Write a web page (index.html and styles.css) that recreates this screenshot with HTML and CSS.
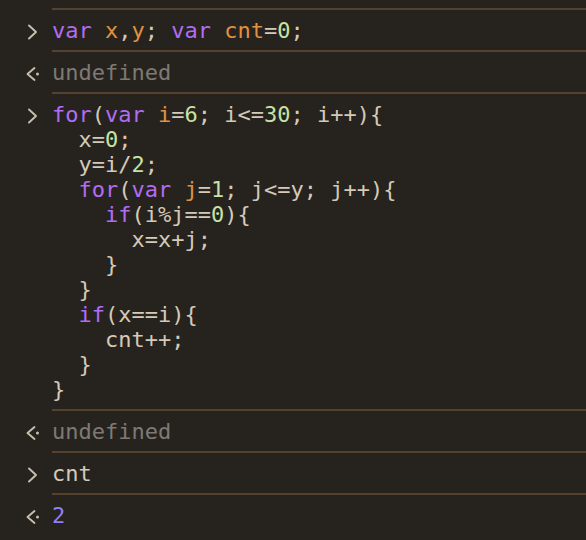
FILE: index.html
```
<!DOCTYPE html>
<html>
<head>
<meta charset="utf-8">
<link rel="stylesheet" href="styles.css">
</head>
<body>
<div class="console">
  <div class="row">
    <div class="gutter"><svg class="icon" viewBox="0 0 16 16"><path d="M5 1.5 L12 8 L5 14.5" /></svg></div>
    <pre class="content"><span class="k">var</span> <span class="v">x</span>,<span class="v">y</span>; <span class="k">var</span> <span class="v">cnt</span>=<span class="n">0</span>;</pre>
  </div>
  <div class="row">
    <div class="gutter"><svg class="icon" viewBox="0 0 16 16"><path d="M10.5 2 L3.5 8 L10.5 14" /><circle class="dot" cx="13.5" cy="8" r="1.5" /></svg></div>
    <pre class="content undef">undefined</pre>
  </div>
  <div class="row">
    <div class="gutter"><svg class="icon" viewBox="0 0 16 16"><path d="M5 1.5 L12 8 L5 14.5" /></svg></div>
    <pre class="content"><span class="k">for</span>(<span class="k">var</span> <span class="v">i</span>=<span class="n">6</span>; i&lt;=<span class="n">30</span>; i++){
  x=<span class="n">0</span>;
  y=i/<span class="n">2</span>;
  <span class="k">for</span>(<span class="k">var</span> <span class="v">j</span>=<span class="n">1</span>; j&lt;=y; j++){
    <span class="k">if</span>(i%j==<span class="n">0</span>){
      x=x+j;
    }
  }
  <span class="k">if</span>(x==i){
    cnt++;
  }
}</pre>
  </div>
  <div class="row">
    <div class="gutter"><svg class="icon" viewBox="0 0 16 16"><path d="M10.5 2 L3.5 8 L10.5 14" /><circle class="dot" cx="13.5" cy="8" r="1.5" /></svg></div>
    <pre class="content undef">undefined</pre>
  </div>
  <div class="row">
    <div class="gutter"><svg class="icon" viewBox="0 0 16 16"><path d="M5 1.5 L12 8 L5 14.5" /></svg></div>
    <pre class="content">cnt</pre>
  </div>
  <div class="row">
    <div class="gutter"><svg class="icon" viewBox="0 0 16 16"><path d="M10.5 2 L3.5 8 L10.5 14" /><circle class="dot" cx="13.5" cy="8" r="1.5" /></svg></div>
    <pre class="content result">2</pre>
  </div>
</div>
</body>
</html>
```
FILE: styles.css
```
html, body {
  margin: 0;
  padding: 0;
  background: #26231f;
  height: 100%;
  overflow: hidden;
}

.console {
  padding-top: 8px;
  font-family: "DejaVu Sans Mono", "Liberation Mono", monospace;
  font-size: 22px;
  color: #d5c9b8;
}

.row {
  display: flex;
}

.gutter {
  width: 52px;
  flex: none;
}

.icon {
  display: block;
  width: 16px;
  height: 16px;
  margin-top: 16px;
  margin-left: 24px;
  fill: none;
  stroke: #c9bdae;
  stroke-width: 1.9;
  stroke-linecap: round;
  stroke-linejoin: round;
}

.icon .dot {
  fill: #c9bdae;
  stroke: none;
}

.content {
  flex: 1;
  margin: 0;
  padding: 7.5px 0;
  border-top: 2px solid #54422f;
  font: inherit;
  line-height: 25px;
  white-space: pre;
}

.row:last-child .content {
  padding-bottom: 0;
}

.k { color: #b26cf2; }
.v { color: #e1913f; }
.n { color: #c6e2a6; }
.undef { color: #7e7a73; }
.result { color: #8f7ff7; }
```
